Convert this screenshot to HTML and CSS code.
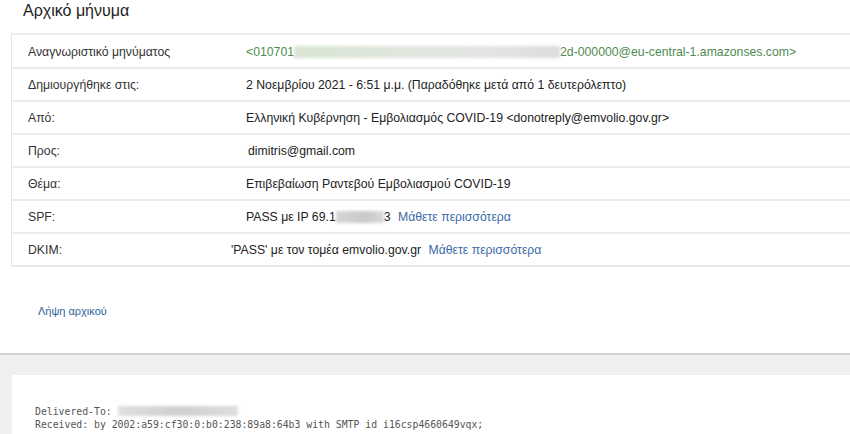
FILE: index.html
```html
<!DOCTYPE html>
<html lang="el">
<head>
<meta charset="utf-8">
<title>Αρχικό μήνυμα</title>
<link rel="stylesheet" href="styles.css">
</head>
<body>
<div class="page">
  <h1 class="title">Αρχικό μήνυμα</h1>
  <div class="table">
    <div class="row">
      <div class="label">Αναγνωριστικό μηνύματος</div>
      <div class="value msgid">&lt;010701<span class="blur blur-green"></span>2d-000000@eu-central-1.amazonses.com&gt;</div>
    </div>
    <div class="row">
      <div class="label">Δημιουργήθηκε στις:</div>
      <div class="value">2 Νοεμβρίου 2021 - 6:51 μ.μ. (Παραδόθηκε μετά από 1 δευτερόλεπτο)</div>
    </div>
    <div class="row">
      <div class="label">Από:</div>
      <div class="value">Ελληνική Κυβέρνηση - Εμβολιασμός COVID-19 &lt;donotreply@emvolio.gov.gr&gt;</div>
    </div>
    <div class="row">
      <div class="label">Προς:</div>
      <div class="value to">dimitris@gmail.com</div>
    </div>
    <div class="row">
      <div class="label">Θέμα:</div>
      <div class="value">Επιβεβαίωση Ραντεβού Εμβολιασμού COVID-19</div>
    </div>
    <div class="row">
      <div class="label">SPF:</div>
      <div class="value">PASS με IP 69.1<span class="blur blur-gray"></span>3 <a class="link" href="#">Μάθετε περισσότερα</a></div>
    </div>
    <div class="row">
      <div class="label">DKIM:</div>
      <div class="value dkim">'PASS' με τον τομέα emvolio.gov.gr <a class="link" href="#">Μάθετε περισσότερα</a></div>
    </div>
  </div>
  <div class="download"><a class="dl-link" href="#">Λήψη αρχικού</a></div>
  <div class="raw-band">
    <div class="raw-panel">
      <pre class="raw">Delivered-To: <span class="blur blur-raw"></span>
Received: by 2002:a59:cf30:0:b0:238:89a8:64b3 with SMTP id i16csp4660649vqx;</pre>
    </div>
  </div>
</div>
</body>
</html>
```
FILE: styles.css
```css
html, body {
  margin: 0;
  padding: 0;
  background: #ffffff;
  overflow: hidden;
}
.page {
  width: 850px;
  height: 434px;
  font-family: "Liberation Sans", Arial, sans-serif;
  color: #222;
}
.title {
  margin: 0;
  padding: 1px 0 0 23px;
  height: 32px;
  font-size: 16px;
  font-weight: normal;
  line-height: 19px;
  color: #222;
}
.table {
  margin-left: 11px;
  margin-right: -10px;
  border: 1px solid #e6e6e6;
  border-top: 2px solid #ededed;
  border-bottom: 2px solid #e8e8e8;
}
.row {
  display: flex;
  align-items: center;
  border-top: 2px solid #ececec;
  font-size: 12.25px;
  line-height: 15px;
  padding-top: 2px;
  box-sizing: border-box;
  height: 33px;
}
.row:first-child {
  border-top: none;
  height: 32px;
}
.label {
  width: 218px;
  flex: none;
  padding-left: 16px;
  color: #333;
}
.value {
  color: #222;
  white-space: nowrap;
}
.msgid {
  color: #4f8a4f;
}
.to {
  padding-left: 2px;
}
.dkim {
  margin-left: -15px;
}
.link {
  color: #3b6aa8;
  text-decoration: none;
  margin-left: 4px;
}
.blur {
  display: inline-block;
  filter: blur(1.5px);
  vertical-align: -2px;
}
.blur-green {
  width: 266px;
  height: 12px;
  background: linear-gradient(90deg, #d8e4d4, #dfe6dc 40%, #e3e3e3 75%, #dcdcdc);
}
.blur-gray {
  width: 48px;
  height: 12px;
  background: linear-gradient(90deg, #d6d6d6, #c8c8c8 60%, #dadada);
}
.download {
  height: 86px;
  padding-left: 38px;
  box-sizing: border-box;
  padding-top: 38px;
  font-size: 11px;
}
.dl-link {
  color: #2f5f9c;
  text-decoration: none;
}
.raw-band {
  border-top: 2px solid #d2d2d2;
  background: #efefef;
  padding: 20px 0 0 12px;
  height: 60px;
}
.raw-panel {
  background: #ffffff;
  height: 100%;
  padding: 30px 0 0 23px;
  box-sizing: border-box;
}
.raw {
  margin: 0;
  font-family: "DejaVu Sans Mono", "Liberation Mono", monospace;
  font-size: 9.8px;
  line-height: 13px;
  color: #555;
}
.blur-raw {
  width: 120px;
  height: 10px;
  vertical-align: -1px;
  background: linear-gradient(90deg, #e0e0e0, #cfcfcf 50%, #dedede);
}
```
